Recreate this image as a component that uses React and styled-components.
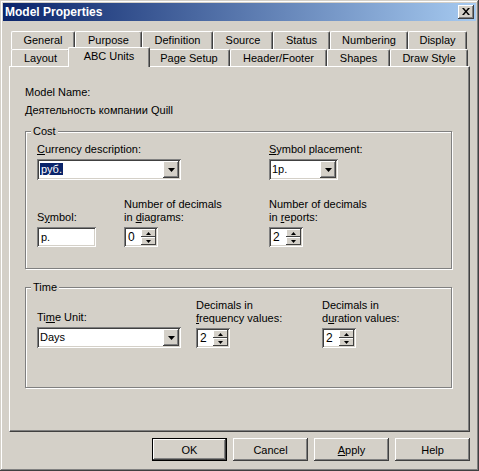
import styled, { createGlobalStyle } from "styled-components";

const GlobalStyle = createGlobalStyle`
  html, body { margin: 0; padding: 0; background: #d4d0c8; }
  body {
    font-family: "Liberation Sans", Arial, sans-serif;
    font-size: 11px;
    color: #000;
  }
`;

const raised = `inset -1px -1px #404040, inset 1px 1px #fff, inset -2px -2px #808080, inset 2px 2px #d4d0c8`;
const sunken = `inset 1px 1px #808080, inset -1px -1px #fff, inset 2px 2px #404040, inset -2px -2px #d4d0c8`;

const Window = styled.div`
  width: 479px;
  height: 471px;
  box-sizing: border-box;
  padding: 3px;
  background: #d4d0c8;
  box-shadow: inset -1px -1px #404040, inset 1px 1px #d4d0c8, inset -2px -2px #808080, inset 2px 2px #fff;
  display: flex;
  flex-direction: column;
`;

const TitleBar = styled.div`
  height: 18px;
  display: flex;
  align-items: center;
  justify-content: space-between;
  padding: 0 2px;
  background: linear-gradient(to right, #0a246a, #a6caf0);
  color: #fff;
  font-weight: bold;
  font-size: 12px;
`;

const CloseBtn = styled.div`
  width: 16px;
  height: 14px;
  box-sizing: border-box;
  background: #d4d0c8;
  box-shadow: ${raised};
  display: flex;
  align-items: center;
  justify-content: center;
  padding-bottom: 1px;
`;

const Body = styled.div`
  padding: 10px 6px 0;
  display: flex;
  flex-direction: column;
`;

const TabRow = styled.div`
  display: flex;
  padding-left: 2px;
  height: ${p => p.$h}px;
`;

const Tab = styled.div`
  box-sizing: border-box;
  width: ${p => p.$w}px;
  height: 18px;
  display: flex;
  align-items: center;
  justify-content: center;
  border-top: 1px solid #fff;
  border-left: 1px solid #fff;
  border-right: 1px solid #404040;
  box-shadow: inset -1px 0 #808080;
  border-radius: 2px 2px 0 0;
  background: #d4d0c8;
  padding-bottom: 1px;
`;

const ActiveTab = styled(Tab)`
  position: relative;
  z-index: 1;
  width: ${p => p.$w + 4}px;
  height: 20px;
  margin: -2px -2px 0;
  padding-bottom: 3px;
`;

const Panel = styled.div`
  box-sizing: border-box;
  height: 366px;
  border: 1px solid #404040;
  border-top-color: #fff;
  border-left-color: #fff;
  box-shadow: inset -1px -1px #808080;
  padding: 19px 15px 0;
`;

const Text = styled.div`
  line-height: 13px;
  margin-top: ${p => p.$mt || 0}px;
  white-space: nowrap;
`;

const GroupBox = styled.div`
  box-sizing: border-box;
  width: 427px;
  margin-top: ${p => p.$mt}px;
  border: 1px solid #808080;
  box-shadow: inset 1px 1px #fff, 1px 1px #fff;
  padding: 0 10px ${p => p.$pb}px 11px;
`;

const Legend = styled.div`
  width: fit-content;
  margin: -7px 0 0 -6px;
  padding: 0 2px;
  background: #d4d0c8;
  line-height: 13px;
`;

const FormGrid = styled.div`
  display: grid;
  grid-template-columns: ${p => p.$cols};
  row-gap: 18px;
  align-items: end;
  margin-top: 5px;
`;

const Field = styled.div`
  display: flex;
  flex-direction: column;
  align-items: flex-start;
  gap: 3px;
  grid-column: span ${p => p.$span || 1};
`;

const Combo = styled.div`
  box-sizing: border-box;
  width: ${p => p.$w}px;
  height: 21px;
  background: #fff;
  box-shadow: ${sunken};
  display: flex;
  align-items: center;
  padding: 2px;
`;

const ComboValue = styled.div`
  flex: 1;
  padding-left: 1px;
  line-height: 13px;
`;

const Selected = styled.span`
  background: #0a246a;
  color: #fff;
  padding: 0 1px;
`;

const DropBtn = styled.div`
  width: 16px;
  height: 17px;
  box-sizing: border-box;
  background: #d4d0c8;
  box-shadow: ${raised};
  display: flex;
  align-items: center;
  justify-content: center;
`;

const TextBox = styled.div`
  box-sizing: border-box;
  width: ${p => p.$w}px;
  height: 20px;
  background: #fff;
  box-shadow: ${sunken};
  padding: 3px 4px;
  line-height: 14px;
`;

const Spin = styled.div`
  box-sizing: border-box;
  width: 34px;
  height: 20px;
  background: #fff;
  box-shadow: ${sunken};
  display: flex;
  padding: 2px;
`;

const SpinValue = styled.div`
  flex: 1;
  padding-left: 2px;
  line-height: 16px;
  font-size: 12px;
`;

const SpinBtns = styled.div`
  width: 15px;
  display: flex;
  flex-direction: column;
`;

const SpinBtn = styled.div`
  flex: 1;
  background: #d4d0c8;
  box-shadow: inset -1px -1px #404040, inset 1px 1px #fff;
  display: flex;
  align-items: center;
  justify-content: center;
`;

const ButtonRow = styled.div`
  display: flex;
  justify-content: flex-end;
  gap: 6px;
  margin-top: 6px;
`;

const Button = styled.button`
  width: 75px;
  height: 23px;
  box-sizing: border-box;
  font-family: "Liberation Sans", Arial, sans-serif;
  font-size: 11px;
  color: #000;
  background: #d4d0c8;
  border: ${p => (p.$default ? "1px solid #000" : "none")};
  box-shadow: ${raised};
  padding: 0;
`;

const Down = () => (
  <svg width="7" height="4" viewBox="0 0 7 4">
    <path d="M0 0h7L3.5 4z" fill="#000" />
  </svg>
);

const Arrow = ({ up }) => (
  <svg width="5" height="3" viewBox="0 0 5 3">
    <path d={up ? "M2.5 0L5 3H0z" : "M0 0h5L2.5 3z"} fill="#000" />
  </svg>
);

const NumInput = ({ value }) => (
  <Spin>
    <SpinValue>{value}</SpinValue>
    <SpinBtns>
      <SpinBtn><Arrow up /></SpinBtn>
      <SpinBtn><Arrow /></SpinBtn>
    </SpinBtns>
  </Spin>
);

const ComboBox = ({ w, children }) => (
  <Combo $w={w}>
    <ComboValue>{children}</ComboValue>
    <DropBtn><Down /></DropBtn>
  </Combo>
);

const row1 = [
  ["General", 64], ["Purpose", 67], ["Definition", 71], ["Source", 60],
  ["Status", 57], ["Numbering", 78], ["Display", 59],
];
const row2 = [
  ["Layout", 59], ["ABC Units", 78], ["Page Setup", 82],
  ["Header/Footer", 97], ["Shapes", 63], ["Draw Style", 78],
];

export default function App() {
  return (
    <>
      <GlobalStyle />
      <Window>
        <TitleBar>
          <span>Model Properties</span>
          <CloseBtn>
            <svg width="8" height="7" viewBox="0 0 8 7">
              <path d="M0 0h2l2 2.5L6 0h2L5 3.5 8 7H6L4 4.5 2 7H0l3-3.5z" fill="#000" />
            </svg>
          </CloseBtn>
        </TitleBar>
        <Body>
          <TabRow $h={18}>
            {row1.map(([t, w]) => <Tab key={t} $w={w}>{t}</Tab>)}
          </TabRow>
          <TabRow $h={17}>
            {row2.map(([t, w]) =>
              t === "ABC Units"
                ? <ActiveTab key={t} $w={w}>{t}</ActiveTab>
                : <Tab key={t} $w={w}>{t}</Tab>
            )}
          </TabRow>
          <Panel>
            <Text>Model Name:</Text>
            <Text $mt={5}>Деятельность компании Quill</Text>

            <GroupBox $mt={14} $pb={21}>
              <Legend>Cost</Legend>
              <FormGrid $cols="87px 145px 1fr">
                <Field $span={2}>
                  <Text><u>C</u>urrency description:</Text>
                  <ComboBox w={144}><Selected>руб.</Selected></ComboBox>
                </Field>
                <Field>
                  <Text><u>S</u>ymbol placement:</Text>
                  <ComboBox w={69}>1p.</ComboBox>
                </Field>
                <Field>
                  <Text>S<u>y</u>mbol:</Text>
                  <TextBox $w={59}>p.</TextBox>
                </Field>
                <Field>
                  <Text>Number of decimals<br />in <u>d</u>iagrams:</Text>
                  <NumInput value="0" />
                </Field>
                <Field>
                  <Text>Number of decimals<br />in <u>r</u>eports:</Text>
                  <NumInput value="2" />
                </Field>
              </FormGrid>
            </GroupBox>

            <GroupBox $mt={18} $pb={39}>
              <Legend>Time</Legend>
              <FormGrid $cols="159px 126px 1fr">
                <Field>
                  <Text>Ti<u>m</u>e Unit:</Text>
                  <ComboBox w={144}>Days</ComboBox>
                </Field>
                <Field>
                  <Text>Decimals in<br /><u>f</u>requency values:</Text>
                  <NumInput value="2" />
                </Field>
                <Field>
                  <Text>Decimals in<br />d<u>u</u>ration values:</Text>
                  <NumInput value="2" />
                </Field>
              </FormGrid>
            </GroupBox>
          </Panel>
          <ButtonRow>
            <Button $default>OK</Button>
            <Button>Cancel</Button>
            <Button><u>A</u>pply</Button>
            <Button>Help</Button>
          </ButtonRow>
        </Body>
      </Window>
    </>
  );
}
